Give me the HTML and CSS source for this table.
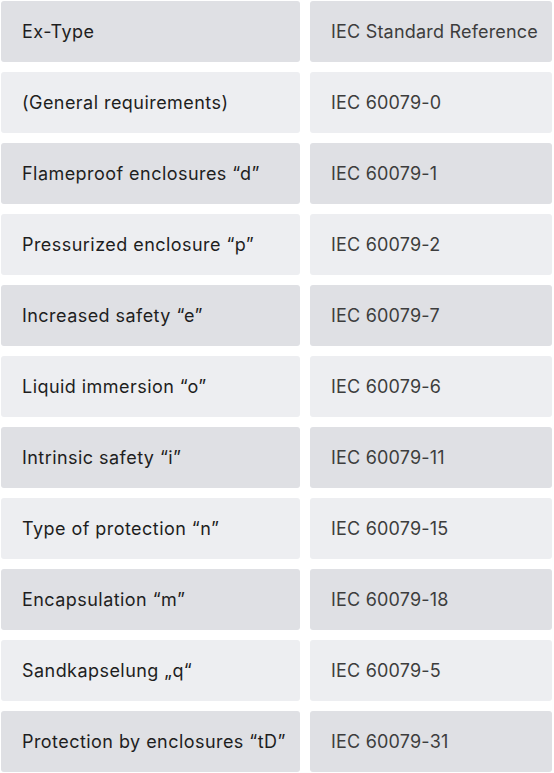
FILE: index.html
```html
<!DOCTYPE html>
<html>
<head>
<meta charset="utf-8">
<link rel="stylesheet" href="styles.css">
</head>
<body>
<div class="table">
  <div class="cell dark name">Ex-Type</div><div class="cell dark ref">IEC Standard Reference</div>
  <div class="cell light name">(General requirements)</div><div class="cell light ref">IEC 60079-0</div>
  <div class="cell dark name">Flameproof enclosures “d”</div><div class="cell dark ref">IEC 60079-1</div>
  <div class="cell light name">Pressurized enclosure “p”</div><div class="cell light ref">IEC 60079-2</div>
  <div class="cell dark name">Increased safety “e”</div><div class="cell dark ref">IEC 60079-7</div>
  <div class="cell light name">Liquid immersion “o”</div><div class="cell light ref">IEC 60079-6</div>
  <div class="cell dark name">Intrinsic safety “i”</div><div class="cell dark ref">IEC 60079-11</div>
  <div class="cell light name">Type of protection “n”</div><div class="cell light ref">IEC 60079-15</div>
  <div class="cell dark name">Encapsulation “m”</div><div class="cell dark ref">IEC 60079-18</div>
  <div class="cell light name">Sandkapselung „q“</div><div class="cell light ref">IEC 60079-5</div>
  <div class="cell dark name">Protection by enclosures “tD”</div><div class="cell dark ref">IEC 60079-31</div>
</div>
</body>
</html>
```
FILE: styles.css
```css
html, body {
  margin: 0;
  padding: 0;
  background: #ffffff;
}
body {
  padding: 1px 0 0 1px;
  font-family: Inter, "Open Sans", sans-serif;
}
.table {
  display: grid;
  grid-template-columns: 299px 242px;
  grid-auto-rows: 61px;
  column-gap: 10px;
  row-gap: 10px;
}
.cell {
  display: flex;
  align-items: center;
  border-radius: 3px;
  font-size: 18px;
  padding-left: 21px;
  padding-bottom: 1px;
}
.name {
  color: #1e1e1e;
  letter-spacing: 0.45px;
}
.ref {
  color: #3d3d3d;
  letter-spacing: 0.2px;
}
.dark {
  background: #dfe0e4;
}
.light {
  background: #edeef1;
}
```
